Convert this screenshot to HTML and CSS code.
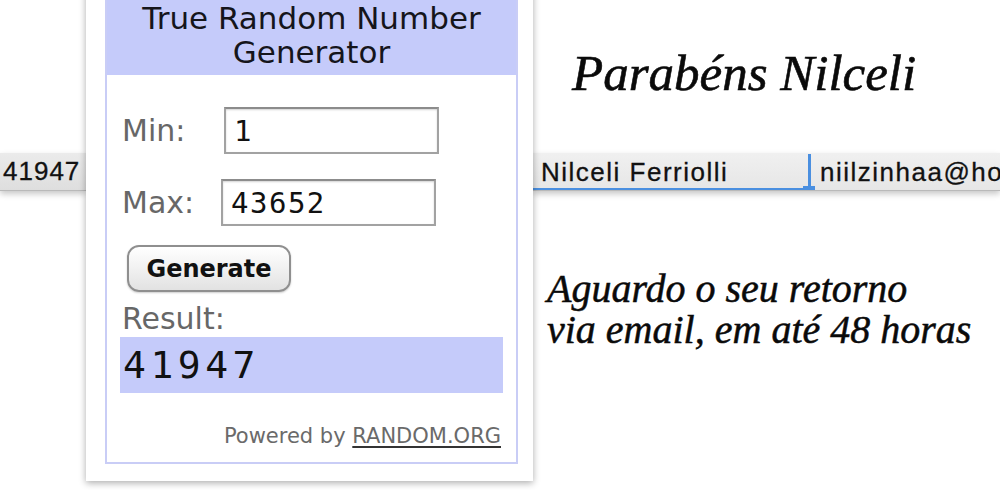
FILE: index.html
```html
<!DOCTYPE html>
<html lang="pt">
<head>
<meta charset="utf-8">
<title>Sorteio</title>
<link rel="stylesheet" href="styles.css">
</head>
<body>
<div class="page">
  <div class="left-col">
    <div class="sheet-row left-row"><span class="cell-num">41947</span></div>
  </div>

  <div class="card">
    <div class="widget">
      <div class="widget-head">
        <span class="head-line">True Random Number</span>
        <span class="head-line head-line-2">Generator</span>
      </div>
      <div class="widget-body">
        <div class="field-row">
          <span class="field-label">Min:</span>
          <div class="field-input">1</div>
        </div>
        <div class="field-row field-row-max">
          <span class="field-label">Max:</span>
          <div class="field-input field-input-max">43652</div>
        </div>
        <div class="btn">Generate</div>
        <div class="result-label">Result:</div>
        <div class="result-box">41947</div>
        <div class="powered">Powered by <span class="powered-link">RANDOM.ORG</span></div>
      </div>
    </div>
  </div>

  <div class="right-col">
    <h1 class="congrats">Parabéns Nilceli</h1>
    <div class="sheet-row right-row">
      <div class="cell cell-name">Nilceli Ferriolli</div>
      <div class="cursor"><span class="cursor-bar"></span><span class="cursor-knob"></span></div>
      <div class="cell cell-mail">niilzinhaa@hotmail.com</div>
    </div>
    <p class="note">Aguardo o seu retorno<br>via email, em até 48 horas</p>
  </div>
</div>
</body>
</html>
```

FILE: styles.css
```css
html, body {
  margin: 0;
  padding: 0;
  background: #ffffff;
}

.page {
  width: 1000px;
  height: 490px;
  overflow: hidden;
  display: flex;
  align-items: flex-start;
}

/* spreadsheet rows */
.left-col {
  width: 86px;
  flex: none;
  padding-top: 153px;
}

.sheet-row {
  height: 37px;
  background: linear-gradient(#f0f0f0, #e6e6e6);
  border-bottom: 1px solid #b9b9b9;
  box-shadow: 0 3px 6px rgba(0, 0, 0, 0.22);
  font-family: "Liberation Sans", Arial, sans-serif;
  color: #111;
}

.left-row {
  display: flex;
  align-items: center;
  padding-left: 3px;
  background: linear-gradient(#ebebeb, #dedede);
}

.cell-num {
  font-size: 26px;
  letter-spacing: 1px;
  -webkit-text-stroke: 0.3px #111;
}

/* random.org widget */
.card {
  flex: none;
  position: relative;
  z-index: 2;
  width: 413px;
  margin-top: -12px;
  padding: 10px 15px 17px 19px;
  background: #ffffff;
  box-shadow: 0 2px 7px rgba(0, 0, 0, 0.33);
}

.widget {
  border: 2px solid #c9cdf6;
  font-family: "DejaVu Sans", Verdana, sans-serif;
}

.widget-head {
  background: #c5cbfa;
  color: #15151b;
  font-size: 31px;
  text-align: center;
  padding: 0 0 4px;
}

.head-line {
  display: block;
  line-height: 37px;
}

.head-line-2 {
  margin-top: -3px;
}

.widget-body {
  padding: 32px 13px 14px;
}

.field-row {
  display: flex;
  align-items: center;
}

.field-row-max {
  margin-top: 25px;
}

.field-label {
  width: 102px;
  flex: none;
  padding-left: 2px;
  font-size: 30px;
  color: #676767;
}

.field-input {
  width: 203px;
  height: 43px;
  padding-left: 8px;
  border: 2px solid #a2a2a2;
  border-top-color: #8c8c8c;
  box-shadow: inset 0 1px 2px rgba(0, 0, 0, 0.18);
  display: flex;
  align-items: center;
  font-family: "DejaVu Sans Mono", monospace;
  font-size: 29px;
  letter-spacing: 1.5px;
  color: #111;
}

.field-input-max {
  margin-left: -3px;
}

.btn {
  margin: 19px 0 0 7px;
  width: 160px;
  height: 43px;
  border: 2px solid #8f8f8f;
  border-radius: 12px;
  background: linear-gradient(#ffffff, #f1f1f1 50%, #e2e2e2);
  box-shadow: 0 1px 2px rgba(0, 0, 0, 0.2);
  display: flex;
  align-items: center;
  justify-content: center;
  font-size: 24px;
  font-weight: bold;
  color: #111;
}

.result-label {
  margin-top: 10px;
  padding-left: 2px;
  font-size: 30px;
  line-height: 34px;
  color: #676767;
}

.result-box {
  margin-top: 1px;
  height: 56px;
  background: #c5cbfa;
  display: flex;
  align-items: center;
  padding-left: 3px;
  font-family: "DejaVu Sans Mono", monospace;
  font-size: 38px;
  letter-spacing: 4.5px;
  color: #111;
}

.powered {
  margin-top: 31px;
  text-align: right;
  padding-right: 2px;
  font-size: 21px;
  line-height: 24px;
  color: #6a6a6a;
}

.powered-link {
  text-decoration: underline;
  text-decoration-color: #333;
  text-underline-offset: 3px;
}

/* right column */
.right-col {
  flex: 1;
  min-width: 0;
}

.congrats {
  margin: 48px 0 0;
  padding-left: 39px;
  font-family: "Liberation Serif", "Times New Roman", serif;
  font-style: italic;
  font-weight: normal;
  font-size: 51px;
  line-height: 50px;
  color: #0a0a0a;
  -webkit-text-stroke: 0.6px #0a0a0a;
}

.right-row {
  margin-top: 55px;
  display: flex;
  align-items: stretch;
  overflow: hidden;
}

.cell {
  font-size: 26px;
  letter-spacing: 1.5px;
  line-height: 34px;
  padding-top: 2px;
  white-space: nowrap;
  -webkit-text-stroke: 0.3px #111;
}

.cell-name {
  width: 262px;
  flex: none;
  padding-left: 8px;
  border-bottom: 3px solid #4a8fe0;
  margin-bottom: -1px;
}

.cursor {
  width: 12px;
  flex: none;
  display: flex;
  flex-direction: column;
  align-items: center;
  padding-top: 1px;
}

.cursor-bar {
  width: 3px;
  flex: 1;
  background: #4a8fe0;
}

.cursor-knob {
  width: 12px;
  height: 6px;
  background: #4a8fe0;
  margin-bottom: -2px;
}

.cell-mail {
  padding-left: 5px;
  flex: 1;
  overflow: hidden;
}

.note {
  margin: 77px 0 0;
  padding-left: 14px;
  font-family: "Liberation Serif", "Times New Roman", serif;
  font-style: italic;
  font-size: 40px;
  line-height: 41px;
  color: #0a0a0a;
  -webkit-text-stroke: 0.5px #0a0a0a;
}
```
